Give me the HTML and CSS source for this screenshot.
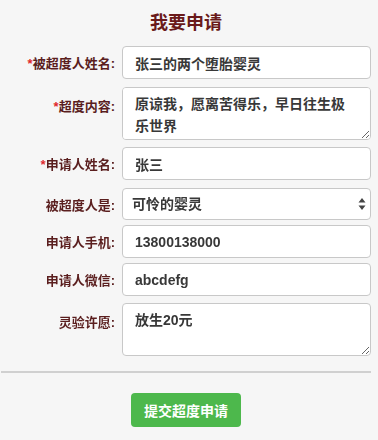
FILE: index.html
```html
<!DOCTYPE html>
<html lang="zh-CN">
<head>
  <meta charset="UTF-8">
  <meta name="viewport" content="width=device-width, initial-scale=1.0">
  <title>我要申请</title>
  <link rel="stylesheet" href="styles.css">
</head>
<body>
  <form class="form">
    <h2 class="title">我要申请</h2>

    <div class="row mb8">
      <label class="label"><i class="star">*</i>被超度人姓名:</label>
      <input class="field" type="text" value="张三的两个堕胎婴灵">
    </div>
    <div class="row mb7 top">
      <label class="label"><i class="star">*</i>超度内容:</label>
      <textarea class="field area">原谅我，愿离苦得乐，早日往生极乐世界</textarea>
    </div>
    <div class="row mb8">
      <label class="label"><i class="star">*</i>申请人姓名:</label>
      <input class="field" type="text" value="张三">
    </div>
    <div class="row mb5">
      <label class="label">被超度人是:</label>
      <div class="selectWrap">
        <select class="field select">
          <option>可怜的婴灵</option>
        </select>
        <svg class="arrows" width="8" height="14" viewBox="0 0 8 14">
          <path d="M4 1 L7.5 5.5 H0.5 Z M4 13 L7.5 8.5 H0.5 Z" fill="#444"/>
        </svg>
      </div>
    </div>
    <div class="row mb5">
      <label class="label">申请人手机:</label>
      <input class="field" type="text" value="13800138000">
    </div>
    <div class="row mb7">
      <label class="label">申请人微信:</label>
      <input class="field" type="text" value="abcdefg">
    </div>
    <div class="row top">
      <label class="label">灵验许愿:</label>
      <textarea class="field area">放生20元</textarea>
    </div>

    <hr class="line">

    <div class="submit">
      <button class="btn" type="button">提交超度申请</button>
    </div>
  </form>
</body>
</html>
```

FILE: styles.css
```css
* { padding:0; margin:0; box-sizing:border-box; }
body {
  background-color: #f6f6f6;
  font-family: "Liberation Sans", "Noto Sans CJK SC", sans-serif;
}

.form {
  width: 372px;
}

.title {
  text-align: center;
  font-size: 18px;
  line-height: 22px;
  color: #6a1a1a;
  padding-top: 12px;
  margin-bottom: 12px;
}

.row {
  display: flex;
  align-items: center;
}
.row.top { align-items: flex-start; }
.mb8 { margin-bottom: 8px; }
.mb7 { margin-bottom: 7px; }
.mb5 { margin-bottom: 5px; }

.label {
  width: 122px;
  flex-shrink: 0;
  padding-right: 7px;
  text-align: right;
  font-size: 13px;
  font-weight: bold;
  color: #5a1e1e;
}
.row.top .label { padding-top: 9px; }

.star {
  font-style: normal;
  color: #e0262b;
}

.field {
  width: 249px;
  height: 33px;
  border: 1px solid #c8c8c8;
  border-radius: 4px;
  background-color: #fff;
  padding: 0 12px;
  font-family: "Liberation Sans", "Noto Sans CJK SC", sans-serif;
  font-size: 14px;
  font-weight: bold;
  color: #383838;
  outline: none;
}

.area {
  height: 53px;
  padding: 5px 12px;
  line-height: 22px;
}

.selectWrap {
  position: relative;
}
.select {
  height: 32px;
  padding: 0 9px;
  appearance: none;
  -webkit-appearance: none;
}
.arrows {
  position: absolute;
  right: 5px;
  top: 9px;
}

.line {
  border: none;
  border-top: 2px solid #d0d0d0;
  margin: 15px 0 0 1px;
  width: 370px;
}

.submit {
  display: flex;
  justify-content: center;
  padding-top: 20px;
}
.btn {
  width: 110px;
  height: 34px;
  border: none;
  border-radius: 4px;
  background-color: #4db84c;
  color: #fff;
  font-family: "Liberation Sans", "Noto Sans CJK SC", sans-serif;
  font-size: 14px;
  font-weight: bold;
}
```
